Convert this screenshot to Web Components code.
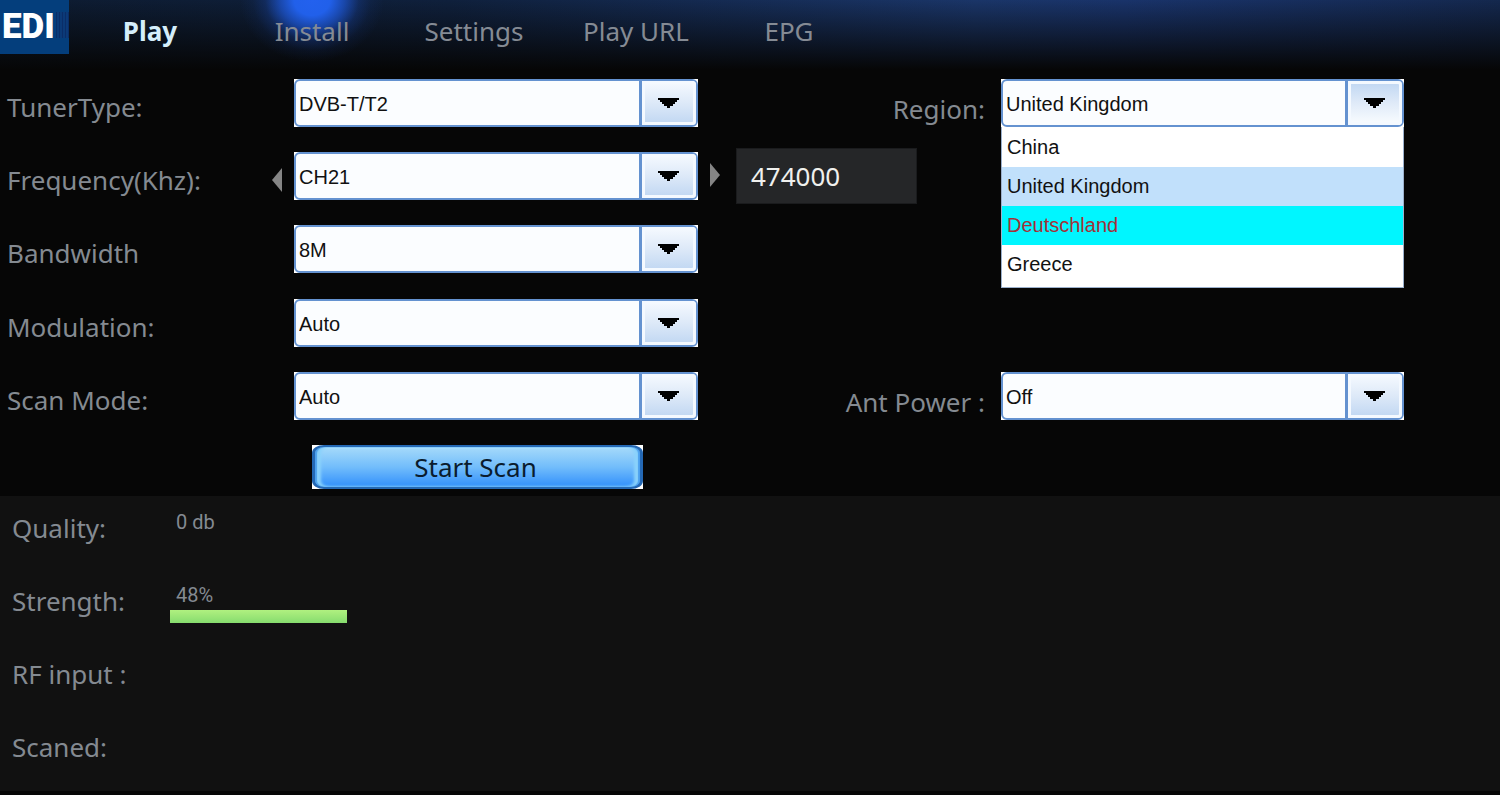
<!DOCTYPE html>
<html lang="en">
<head>
<meta charset="utf-8">
<title>EDI Tuner – Install</title>
<style>
  html, body { margin: 0; background: #060606; }
  body { font: 26px/36px "Noto Sans", "Open Sans", sans-serif; color: #848a91; }
</style>
</head>
<body>
<tuner-app></tuner-app>

<template id="app-tpl">
  <style>
    :host { display: flex; flex-direction: column; min-height: 100vh; }
    .form {
      display: grid;
      grid-template-columns: 698fr 706fr 96fr;
      grid-template-rows: repeat(5, 1fr) auto;
      min-height: 425px;
      padding-top: 8px;
      box-sizing: border-box;
    }
    .form > * { grid-column: 1; }
    .form > .right { grid-column: 2; }
    .r1 { grid-row: 1; } .r2 { grid-row: 2; } .r3 { grid-row: 3; }
    .r4 { grid-row: 4; } .r5 { grid-row: 5; } .r6 { grid-row: 6; }
    .status { flex: 1; background: #111; padding: 0 12px; margin-bottom: 4px; }
  </style>
  <nav-bar></nav-bar>
  <main class="form">
    <combo-field class="r1" label="TunerType:" options="DVB-T/T2|DVB-C"></combo-field>
    <combo-field class="r2" label="Frequency(Khz):" options="CH21|CH22"><step-button slot="before" direction="left"></step-button></combo-field>
    <combo-field class="r3" label="Bandwidth" options="8M|7M|6M"></combo-field>
    <combo-field class="r4" label="Modulation:" options="Auto|QPSK"></combo-field>
    <combo-field class="r5" label="Scan Mode:" options="Auto|Manual"></combo-field>
    <scan-button class="r6">Start Scan</scan-button>
    <combo-field class="right r1" label-end open label="Region:" value="United Kingdom" hot="Deutschland" options="China|United Kingdom|Deutschland|Greece"></combo-field>
    <frequency-box class="right r2" value="474000"></frequency-box>
    <combo-field class="right r5" label-end label="Ant Power :" options="Off|On"></combo-field>
  </main>
  <section class="status">
    <status-row label="Quality:">0 db</status-row>
    <status-row label="Strength:" level="48">48%</status-row>
    <status-row label="RF input :"></status-row>
    <status-row label="Scaned:"></status-row>
  </section>
</template>

<template id="nav-tpl">
  <style>
    :host {
      display: flex; height: 71px;
      background:
        linear-gradient(to bottom, transparent 0, #060606 70px),
        linear-gradient(to right, #0d1b30 0, #0f203c 30%, #1a3568 65%, #19336a 75%, #14284e 100%);
    }
    .logo {
      width: 69px; height: 54px; flex: none; box-sizing: border-box; padding-left: 2px;
      background: repeating-linear-gradient(to right, #0a2d68 0 1px, #0b3a78 1px 3px) 56px 12px / 13px 26px no-repeat, #043e7c;
      color: #fff; font: 900 35px/54px Roboto, sans-serif;
    }
    nav { display: flex; }
    a {
      width: 162px; height: 71px; box-sizing: border-box; padding-top: 13px;
      text-align: center; text-decoration: none; color: #858b94;
    }
    a:last-child { width: 144px; }
    a.bold { font-weight: 700; color: #d5eefb; }
    a.glow { background: radial-gradient(ellipse 72px 62px at 50% 0, #2361ee 0, #2160ea 25%, #1d55d0c0 45%, #1a48b050 65%, #1a48b018 82%, transparent 100%); }
  </style>
  <div class="logo">EDI</div>
  <nav>
    <a class="bold" href="#play">Play</a><a class="glow" href="#install" aria-current="page">Install</a><a href="#settings">Settings</a><a href="#url">Play URL</a><a href="#epg">EPG</a>
  </nav>
</template>

<template id="combo-tpl">
  <style>
    :host { display: grid; grid-template-columns: 294fr 404fr; align-items: start; }
    :host([label-end]) { grid-template-columns: 303fr 403fr; }
    .side { display: flex; justify-content: space-between; padding: 10px 12px 0 7px; }
    :host([label-end]) .side { justify-content: flex-end; padding: 12px 16px 0 0; }
    .combo { position: relative; background: #fff; height: 48px; }
    select {
      appearance: none; display: block; width: 100%; height: 48px; margin: 0;
      padding: 2px 60px 0 3px; border: 2px solid #6492d0; border-radius: 6px;
      background: #fbfdff; color: #111; font: 20px/30px "Liberation Sans", sans-serif; outline: none;
    }
    .drop {
      position: absolute; top: 2px; right: 2px; bottom: 2px; width: 54px;
      border-left: 3px solid #6492d0; box-shadow: inset 0 0 0 3px #f4f9ff;
      background: linear-gradient(#f6faff, #dde9f8 50%, #bfd6f2);
      border-radius: 0 4px 4px 0; pointer-events: none;
      display: flex; align-items: center; justify-content: center;
    }
    :host([open]) .drop { background: linear-gradient(#bfd6f2, #dfeaf8 50%, #fafdff); }
    ul {
      position: absolute; z-index: 2; top: 48px; left: 0; right: 0; margin: 0; padding: 1px 0 3px;
      list-style: none; background: #fff; border: 1px solid #9bb0cc; border-top: 0;
      color: #111; font: 20px/39px "Liberation Sans", sans-serif;
    }
    li { padding: 0 5px; }
    li.sel { background: #c1e0fb; }
    li.hot { background: #00f6ff; color: #a33038; }
  </style>
  <div class="side"><label for="s"></label><slot name="before"></slot></div>
  <div class="combo">
    <select id="s"></select>
    <span class="drop"><svg width="22" height="10" viewBox="0 0 22 10"><path d="M0 0H21V2H19V4H17V6H15V8H12V10H9V8H6V6H4V4H2V2H0Z" fill="#000"/></svg></span>
  </div>
</template>

<template id="step-tpl">
  <style>
    :host { display: block; }
    button { display: block; border: 0; padding: 6px 0; background: none; }
    svg { display: block; }
    :host([direction="right"]) svg { transform: scaleX(-1); }
  </style>
  <button type="button"><svg width="10" height="24" viewBox="0 0 10 24"><path d="M10 0V24L0 12Z" fill="#858585"/></svg></button>
</template>

<template id="freq-tpl">
  <style>
    :host { display: flex; align-items: flex-start; padding-left: 12px; }
    step-button { margin-top: 5px; }
    input {
      width: 181px; height: 56px; box-sizing: border-box; margin: -4px 0 0 16px;
      border: 1px solid #1a1b1d; background: #252628; color: #f0f0ee; padding: 0 14px;
      font: 26px/36px "Noto Sans", sans-serif; outline: none;
    }
  </style>
  <step-button direction="right"></step-button>
  <input type="text" aria-label="Frequency in kHz">
</template>

<template id="scan-tpl">
  <style>
    :host { display: block; padding: 0 0 7px 312px; }
    .plate { width: 331px; background: #fff; }
    button {
      display: block; width: 331px; height: 44px; border: 2px solid #2468b4; border-width: 2px 3px; border-radius: 12px / 8px; padding: 0 4px 0 0;
      background: linear-gradient(#a6dafa, #72bdfb 50%, #318ffb);
      box-shadow: inset 2px 0 1px #4ba0ee, inset -2px 0 1px #4ba0ee, inset 6px 0 3px #8ad2fb, inset -6px 0 3px #8ad2fb, inset 0 2px 1px #b4e2fb;
      color: #0a1c2e; font: 26px/36px "Noto Sans", sans-serif;
    }
  </style>
  <div class="plate"><button type="button"><slot></slot></button></div>
</template>

<template id="status-tpl">
  <style>
    :host { display: grid; grid-template-columns: 158px 1fr; height: 73px; align-items: start; }
    .label { padding-top: 14px; }
    .value { padding: 14px 0 0 6px; font: 20px/24px Roboto, sans-serif; }
    meter { display: none; appearance: none; width: 369px; height: 13px; border: 0; background: none; }
    :host([level]) meter { display: block; margin-top: 9px; }
    meter::-webkit-meter-inner-element { display: block; height: 13px; }
    meter::-webkit-meter-bar { height: 13px; border: 0; border-radius: 0; background: #111; }
    meter::-webkit-meter-optimum-value { border-radius: 0; background: linear-gradient(#b0f080, #86dc6e); }
  </style>
  <span class="label" id="l"></span>
  <div><div class="value"><slot></slot></div><meter min="0" max="100" aria-labelledby="l"></meter></div>
</template>

<script>
  class Base extends HTMLElement {
    constructor() {
      super();
      this.attachShadow({ mode: 'open' }).append(
        document.getElementById(this.constructor.tpl).content.cloneNode(true));
    }
    $(q) { return this.shadowRoot.querySelector(q); }
  }
  customElements.define('nav-bar', class extends Base { static tpl = 'nav-tpl'; });
  customElements.define('step-button', class extends Base {
    static tpl = 'step-tpl';
    connectedCallback() {
      this.$('button').setAttribute('aria-label', this.getAttribute('direction') === 'left' ? 'Previous channel' : 'Next channel');
    }
  });
  customElements.define('scan-button', class extends Base { static tpl = 'scan-tpl'; });
  customElements.define('combo-field', class extends Base {
    static tpl = 'combo-tpl';
    connectedCallback() {
      this.$('label').textContent = this.getAttribute('label');
      const names = this.getAttribute('options').split('|');
      const value = this.getAttribute('value') || names[0];
      this.$('select').replaceChildren(...names.map(n => new Option(n, n, n === value, n === value)));
      if (!this.hasAttribute('open')) return;
      const list = document.createElement('ul');
      list.setAttribute('role', 'listbox');
      for (const n of names) {
        const li = document.createElement('li');
        li.setAttribute('role', 'option');
        li.textContent = n;
        if (n === value) li.className = 'sel';
        if (n === this.getAttribute('hot')) li.className = 'hot';
        list.append(li);
      }
      this.$('.combo').append(list);
    }
  });
  customElements.define('frequency-box', class extends Base {
    static tpl = 'freq-tpl';
    connectedCallback() { this.$('input').value = this.getAttribute('value'); }
  });
  customElements.define('status-row', class extends Base {
    static tpl = 'status-tpl';
    connectedCallback() {
      this.$('.label').textContent = this.getAttribute('label');
      this.$('meter').value = this.getAttribute('level') || 0;
    }
  });
  customElements.define('tuner-app', class extends Base { static tpl = 'app-tpl'; });
</script>
</body>
</html>
